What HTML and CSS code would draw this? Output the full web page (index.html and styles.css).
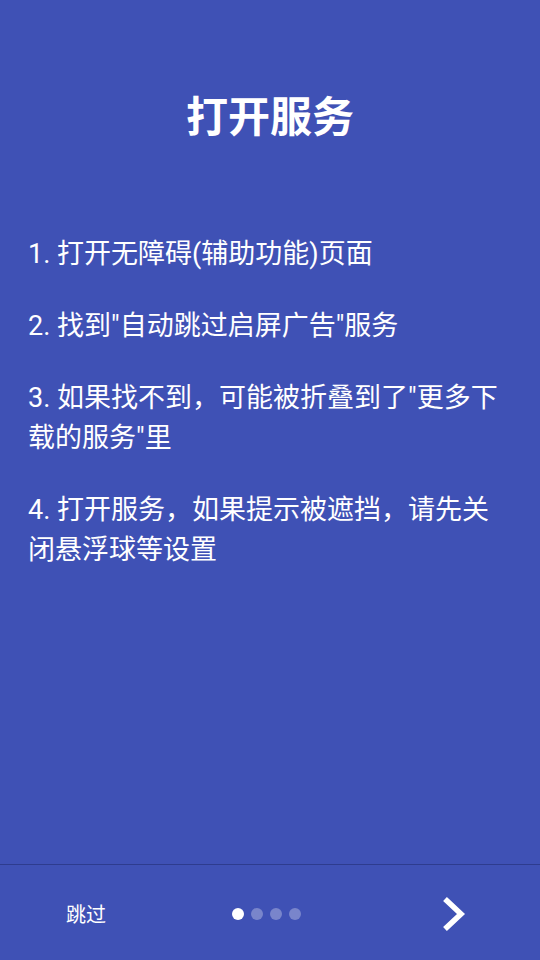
FILE: index.html
```html
<!DOCTYPE html>
<html lang="zh-CN">
<head>
    <meta charset="utf-8">
    <title>打开服务</title>
    <link rel="stylesheet" href="styles.css">
</head>
<body>
    <div class="page">
        <div class="content">
            <h1 class="title">打开服务</h1>
            <div class="steps">
                <p>1. 打开无障碍(辅助功能)页面</p>
                <p>2. 找到"自动跳过启屏广告"服务</p>
                <p>3. 如果找不到，可能被折叠到了"更多下载的服务"里</p>
                <p>4. 打开服务，如果提示被遮挡，请先关闭悬浮球等设置</p>
            </div>
        </div>
        <!-- bottom bar -->
        <div class="footer">
            <div class="skip">跳过</div>
            <div class="dots">
                <span class="dot active"></span>
                <span class="dot"></span>
                <span class="dot"></span>
                <span class="dot"></span>
            </div>
            <div class="next">
                <svg width="24" height="36" viewBox="0 0 24 36">
                    <path d="M3 3 L19 18 L3 33" fill="none" stroke="#ffffff" stroke-width="5.5" stroke-linecap="butt" stroke-linejoin="miter"/>
                </svg>
            </div>
        </div>
    </div>
</body>
</html>
```

FILE: styles.css
```css
* {
    margin: 0;
    padding: 0;
    box-sizing: border-box;
}

body {
    margin: 0;
    background: #3f51b5;
    font-family: Roboto, "Noto Sans CJK SC", sans-serif;
    color: #ffffff;
}

.page {
    width: 540px;
    height: 960px;
    display: flex;
    flex-direction: column;
}

.content {
    flex: 1;
    padding: 94px 28px 0 28px;
}

.title {
    font-size: 42px;
    line-height: 48px;
    font-weight: bold;
    text-align: center;
}

.steps {
    margin-top: 92px;
}

.steps p {
    font-size: 27px;
    line-height: 40px;
    margin-bottom: 32px;
}

/* Bottom bar */

.footer {
    height: 96px;
    border-top: 1px solid #2e3c8e;
    display: flex;
    align-items: center;
}

.skip {
    width: 172px;
    text-align: center;
    font-size: 20px;
    padding-top: 2px;
}

.dots {
    display: flex;
    gap: 7px;
    margin-left: 60px;
    margin-top: 2px;
}

.dot {
    width: 12px;
    height: 12px;
    border-radius: 50%;
    background: rgba(255, 255, 255, 0.3);
}

.dot.active {
    background: #ffffff;
}

.next {
    margin-left: auto;
    margin-right: 74px;
    height: 36px;
    margin-top: 2px;
}

.next svg {
    display: block;
}
```
